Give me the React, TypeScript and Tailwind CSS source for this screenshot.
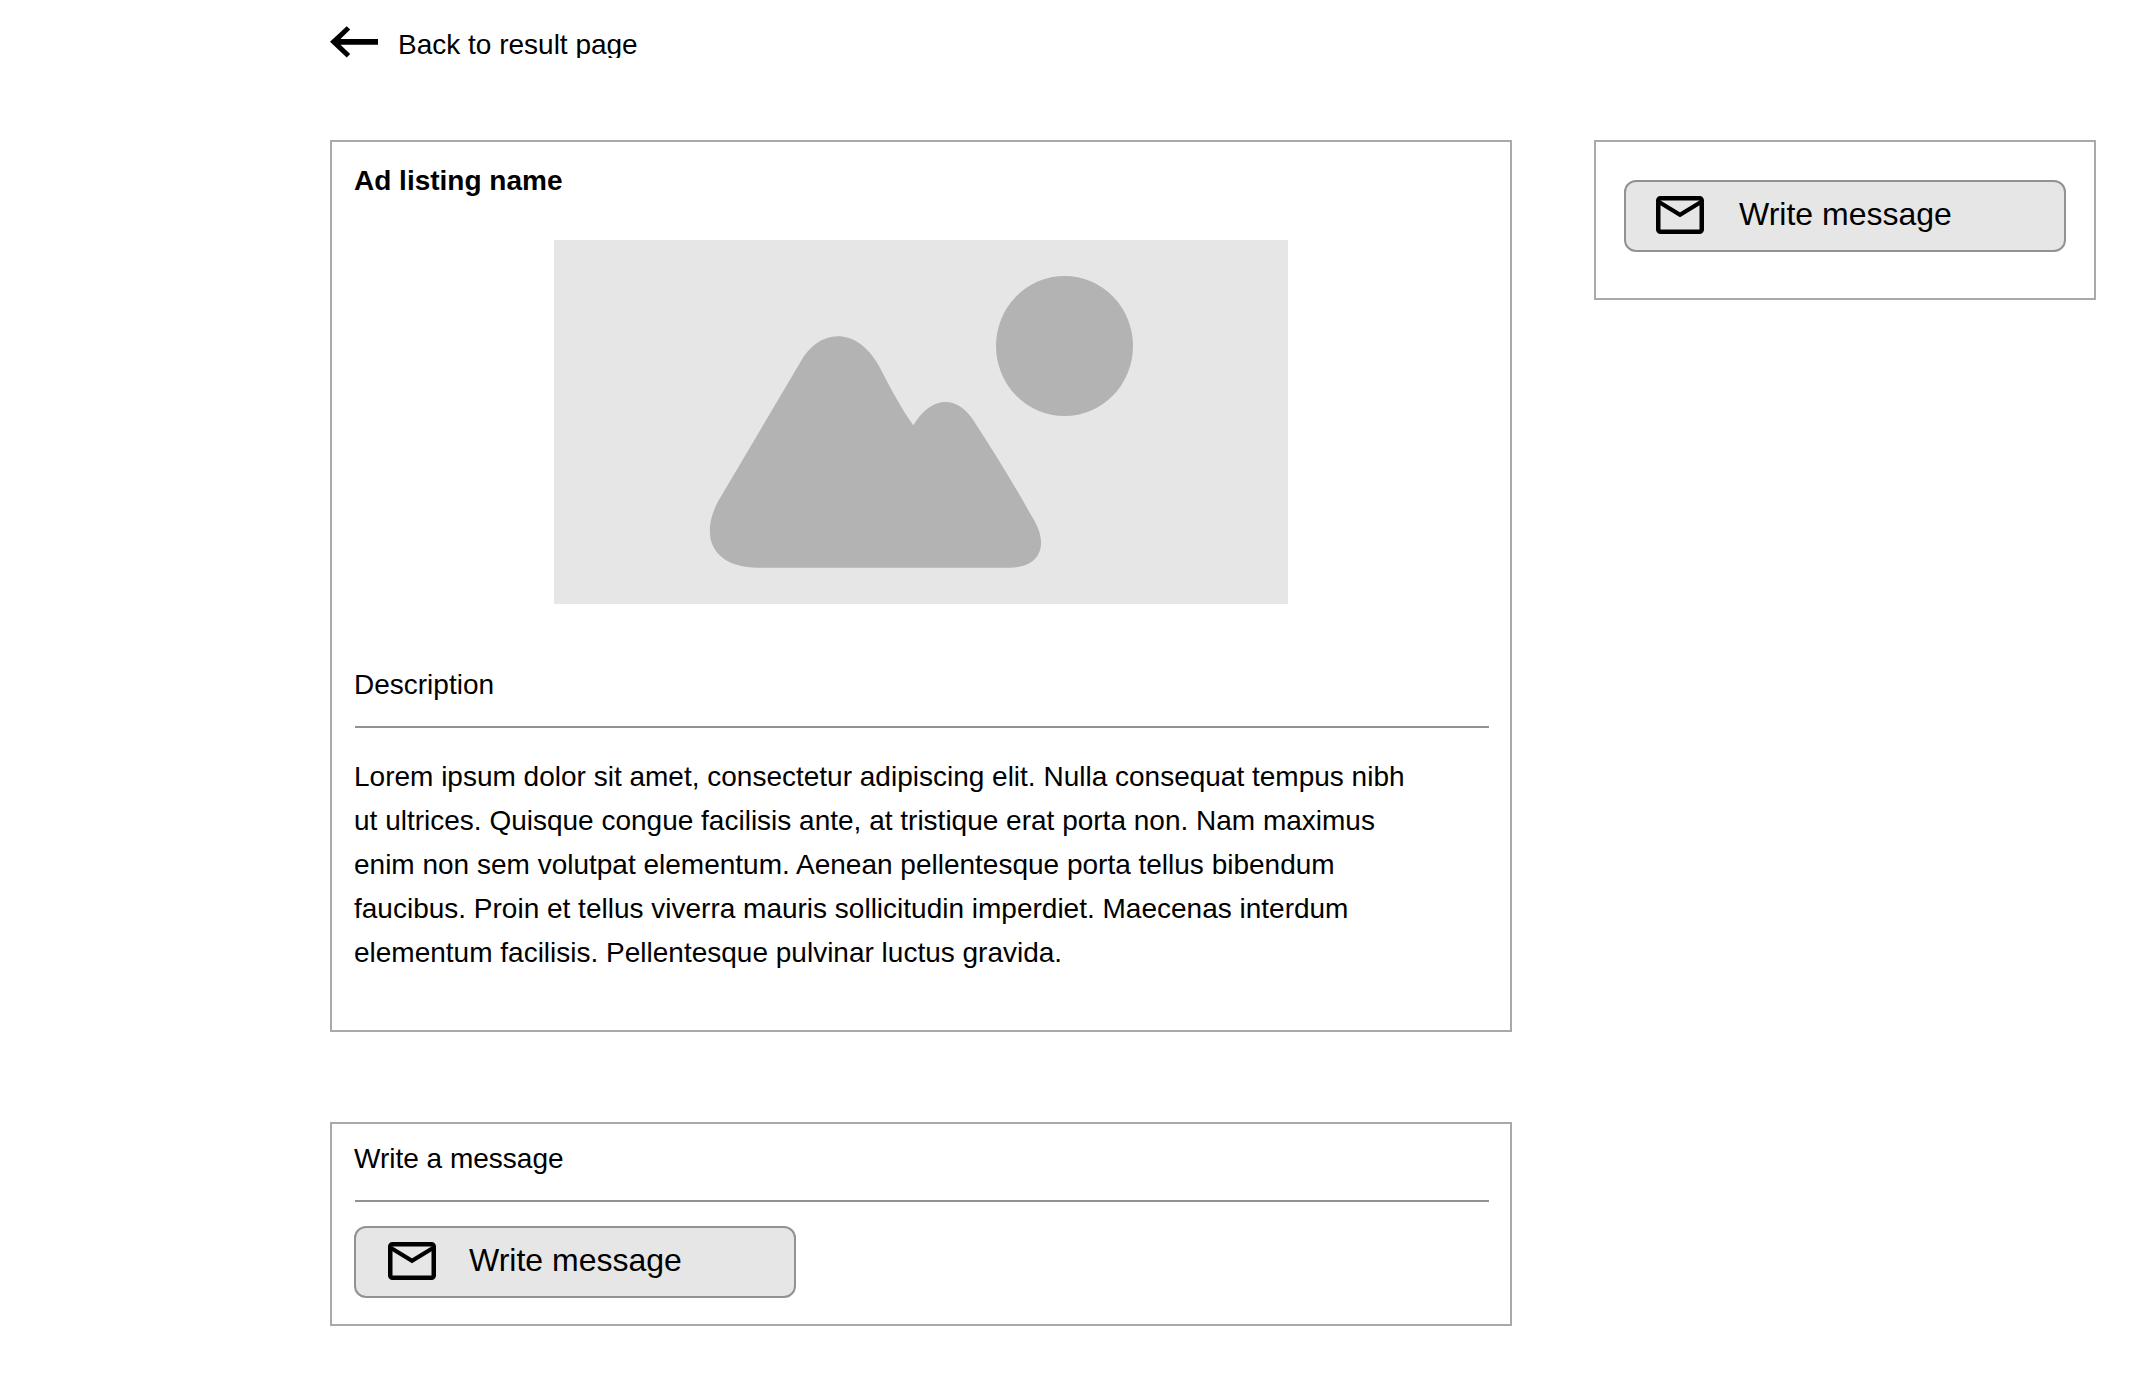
function ArrowLeft() {
  return (
    <svg className="mt-[26px] h-8 w-12 shrink-0" viewBox="0 0 48 32" fill="#000">
      <path d="M0 15.800L16.700 .2L20.200 3.600L10.500 13H48V18.700H10.500L20.200 28.100L16.700 31.500Z" />
    </svg>
  );
}

function MailIcon() {
  return (
    <svg className="h-[38px] w-12 shrink-0" viewBox="0 0 48 38" fill="none" stroke="#000" strokeWidth="4.5">
      <rect x="2.25" y="2.25" width="43.5" height="33.5" rx="2.2" />
      <path d="M3 6L24 18.800l21-12.800" strokeWidth="4.200" />
    </svg>
  );
}

function MessageButton({ className }: { className: string }) {
  return (
    <button
      className={`flex h-[72px] w-[442px] items-start rounded-xl border-2 border-[#929292] bg-[#e6e6e6] pt-[14px] text-[32px] leading-[38px] ${className}`}
    >
      <MailIcon />
      <span className="-mt-[1px] whitespace-nowrap">Write message</span>
    </button>
  );
}

function PlaceholderImage() {
  return (
    <svg className="mx-auto block h-[364px] w-[734px] bg-[#e6e6e6]" viewBox="0 0 734 364" fill="#b3b3b3">
      <ellipse cx="510.500" cy="106" rx="68.500" ry="70" />
      <path d="M246 122.700C265 87.500 303 86.500 325 126C338 151 347 168 359.300 185.300C377 156 402 155 418.700 179.300C440 212 458 241 476 273.300L481 281.700C495 308 484 327.700 456 327.700H204.300C161 327.700 144 299 164.300 261Z" />
    </svg>
  );
}

export default function App() {
  return (
    <div className="h-[1382px] w-[2140px] overflow-hidden bg-white pl-[330px] font-['Liberation_Sans',Arial,sans-serif] text-[28px] leading-[44px] text-black">
      <header className="flex h-[140px] items-start">
        <ArrowLeft />
        <a className="mt-[23px] ml-5 h-[35px] overflow-hidden whitespace-nowrap">Back to result page</a>
      </header>
      <div className="flex items-start gap-[82px]">
        <main className="w-[1182px]">
          <section className="h-[892px] border-2 border-[#a9a9a9] px-[22px] pt-[17px]">
            <h1 className="font-bold">Ad listing name</h1>
            <div className="mt-[37px]">
              <PlaceholderImage />
            </div>
            <h2 className="mt-[59px]">Description</h2>
            <hr className="mt-[19px] -mr-px ml-px border-t-2 border-[#929292]" />
            <p className="mt-[27px] w-[1070px]">
              Lorem ipsum dolor sit amet, consectetur adipiscing elit. Nulla consequat tempus nibh
              ut ultrices. Quisque congue facilisis ante, at tristique erat porta non. Nam maximus
              enim non sem volutpat elementum. Aenean pellentesque porta tellus bibendum
              faucibus. Proin et tellus viverra mauris sollicitudin imperdiet. Maecenas interdum
              elementum facilisis. Pellentesque pulvinar luctus gravida.
            </p>
          </section>
          <section className="mt-[90px] h-[204px] border-2 border-[#a9a9a9] px-[22px] pt-[13px]">
            <h2>Write a message</h2>
            <hr className="mt-[19px] -mr-px mb-6 ml-px border-t-2 border-[#929292]" />
            <MessageButton className="gap-[33px] pl-8" />
          </section>
        </main>
        <aside className="h-40 w-[502px] border-2 border-[#a9a9a9] pt-[38px] pl-7">
          <MessageButton className="gap-[35px] pl-[30px]" />
        </aside>
      </div>
    </div>
  );
}
